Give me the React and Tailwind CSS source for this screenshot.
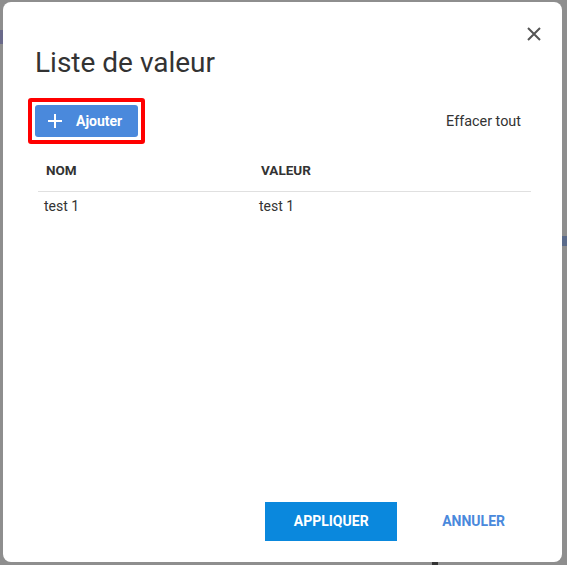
import React from "react";

export default function App() {
  return (
    <div
      className="relative w-[567px] h-[565px] bg-[#8e8e8e] overflow-hidden pt-[2px] pl-[3px]"
      style={{ fontFamily: "Roboto, 'Liberation Sans', sans-serif" }}
    >
      <div className="absolute left-0 top-[30px] w-[3px] h-[14px] bg-[#6a6a8a]" />
      <div className="absolute right-0 top-[236px] w-[5px] h-[10px] bg-[#5a6a8a]" />
      <div className="absolute left-[432px] bottom-0 w-[6px] h-[3px] bg-[#333]" />
      <div className="relative w-[559px] h-[560px] rounded-[8px] bg-white flex flex-col">
        <button className="absolute top-[24px] right-[20px] w-[16px] h-[16px] flex items-center justify-center text-[#555]">
          <svg width="16" height="16" viewBox="0 0 16 16" fill="none" stroke="currentColor" strokeWidth="2">
            <path d="M2 2 L14 14 M14 2 L2 14" />
          </svg>
        </button>
        <h1 className="mt-[44px] pl-[32px] text-[28px] leading-[34px] text-[#333] font-normal">
          Liste de valeur
        </h1>
        <div className="mt-[18px] flex items-center justify-between pl-[25px] pr-[41px]">
          <div className="border-4 border-[#ff0000] p-[3px] rounded-[3px]">
            <div className="w-[103px] h-[32px] rounded-[3px] bg-[#4a89dc] flex items-center text-white">
              <svg className="ml-[13px]" width="14" height="14" viewBox="0 0 14 14" stroke="white" strokeWidth="2">
                <path d="M7 0 V14 M0 7 H14" />
              </svg>
              <span className="ml-[14px] text-[14px] font-bold">Ajouter</span>
            </div>
          </div>
          <span className="pt-[2px] text-[14.4px] text-[#333]">Effacer tout</span>
        </div>
        <div className="mt-[7px] ml-[35px] w-[493px]">
          <div className="flex h-[41px] items-center pb-[2px] border-b border-[#e0e0e0] text-[13.5px] font-bold text-[#333]">
            <div className="w-[215px] pl-[8px]">NOM</div>
            <div className="pl-[8px]">VALEUR</div>
          </div>
          <div className="flex h-[30px] items-center pb-[2px] text-[14px] text-[#333]">
            <div className="w-[215px] pl-[6px]">test 1</div>
            <div className="pl-[6px]">test 1</div>
          </div>
        </div>
        <div className="flex-1" />
        <div className="flex items-center justify-end pb-[21px] pr-[57px]">
          <button className="w-[132px] h-[39px] bg-[#0a88dd] text-white text-[14px] font-bold">
            APPLIQUER
          </button>
          <button className="ml-[45px] text-[#4a89dc] text-[14px] font-bold">ANNULER</button>
        </div>
      </div>
    </div>
  );
}
